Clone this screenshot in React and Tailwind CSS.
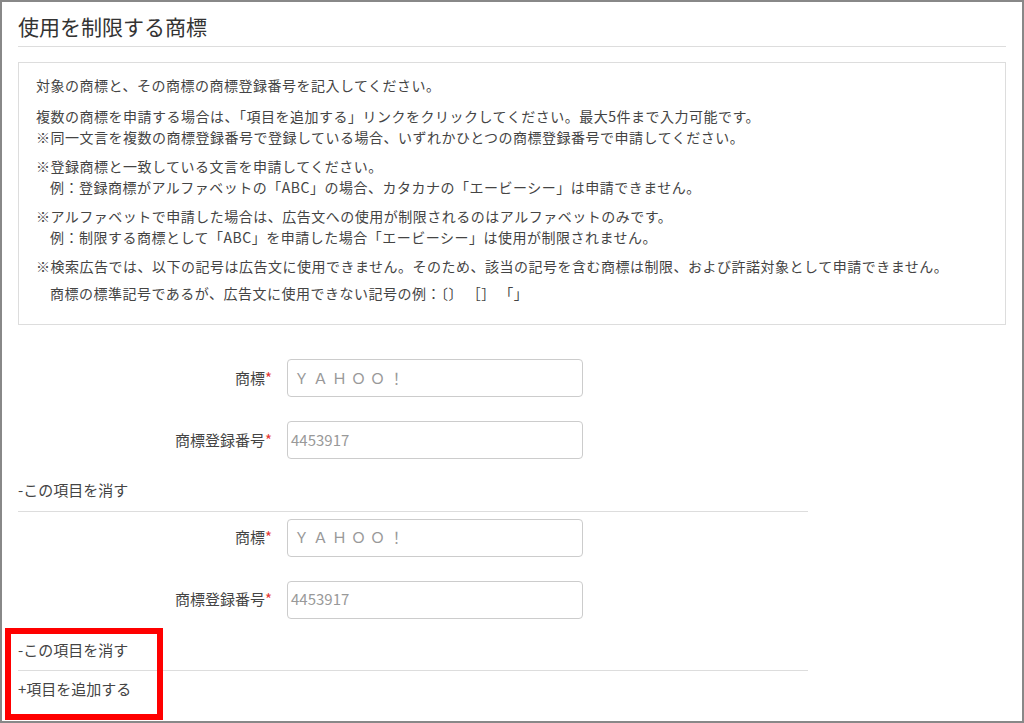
export default function App() {
  const f = { fontFamily: '"Noto Sans CJK JP", "Noto Sans", sans-serif' };
  const Field = ({ label, value, spaced, mt }) => (
    <div className={`flex items-center ${mt}`}>
      <div className="w-[287px] text-right text-[15px] text-[#444] pr-[15px]">
        {label}<span className="text-[#e53935]">*</span>
      </div>
      <div className={`w-[296px] h-[38px] border border-[#ccc] rounded-[4px] flex items-center px-[3px] text-[15px] text-[#999] ${spaced ? "tracking-[4px] pl-[6px]" : ""}`}>{value}</div>
    </div>
  );
  const Group = ({ first }) => (
    <div>
      <Field label="商標" value="ＹＡＨＯＯ！" spaced mt={first ? "mt-[34px]" : "mt-[7px]"} />
      <Field label="商標登録番号" value="4453917" mt="mt-[24px]" />
      <div className="mt-[20px] text-[15px] text-[#444] pl-[18px] w-[808px]">
        <div className="pb-[9px] border-b border-[#ddd]">-この項目を消す</div>
      </div>
    </div>
  );
  return (
    <div style={f} className="w-[1024px] h-[723px] bg-white border-[2px] border-[#888] relative overflow-hidden box-border">
      <div className="px-[16px]">
        <div className="pt-[10px] pb-[6px] text-[21px] text-[#333] border-b border-[#ddd] leading-[28px]">使用を制限する商標</div>
        <div className="mt-[15px] border border-[#ddd] h-[263px] px-[17px] pt-[12px] text-[14px] tracking-[0.5px] text-[#444] leading-[21px]">
          <p>対象の商標と、その商標の商標登録番号を記入してください。</p>
          <p className="mt-[10px]">複数の商標を申請する場合は、「項目を追加する」リンクをクリックしてください。最大5件まで入力可能です。</p>
          <p>※同一文言を複数の商標登録番号で登録している場合、いずれかひとつの商標登録番号で申請してください。</p>
          <p className="mt-[8px]">※登録商標と一致している文言を申請してください。</p>
          <p className="pl-[14px]">例：登録商標がアルファベットの「ABC」の場合、カタカナの「エービーシー」は申請できません。</p>
          <p className="mt-[8px]">※アルファベットで申請した場合は、広告文への使用が制限されるのはアルファベットのみです。</p>
          <p className="pl-[14px]">例：制限する商標として「ABC」を申請した場合「エービーシー」は使用が制限されません。</p>
          <p className="mt-[8px]">※検索広告では、以下の記号は広告文に使用できません。そのため、該当の記号を含む商標は制限、および許諾対象として申請できません。</p>
          <p className="pl-[14px] mt-[6px]">商標の標準記号であるが、広告文に使用できない記号の例：〔〕 ［］ 「」</p>
        </div>
      </div>
      <div className="-ml-[2px]">
        <Group first />
        <Group />
        <div className="mt-[7px] text-[15px] text-[#444] pl-[18px]">+項目を追加する</div>
      </div>
      <div className="absolute left-[3px] top-[626px] w-[158px] h-[92px] border-[6px] border-[#ff0000]" />
    </div>
  );
}
